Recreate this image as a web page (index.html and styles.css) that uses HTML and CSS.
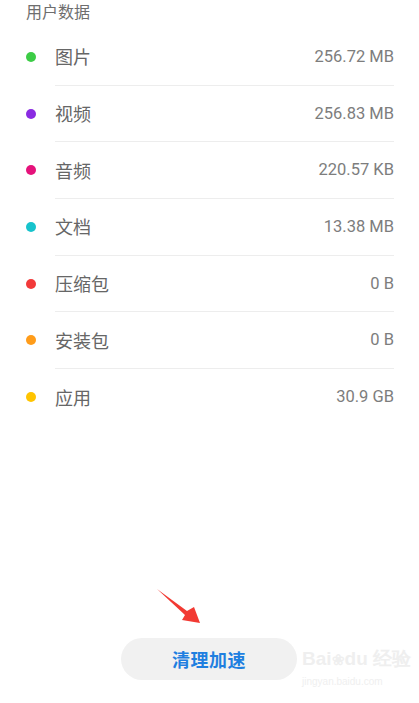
FILE: index.html
```html
<!DOCTYPE html>
<html lang="zh">
<head>
<meta charset="utf-8">
<link rel="stylesheet" href="styles.css">
</head>
<body>
<div class="page">
  <div class="header">用户数据</div>
  <ul class="list">
    <li class="row"><span class="dot green"></span><div class="cell"><span class="label">图片</span><span class="value">256.72 MB</span></div></li>
    <li class="row"><span class="dot purple"></span><div class="cell"><span class="label">视频</span><span class="value">256.83 MB</span></div></li>
    <li class="row"><span class="dot magenta"></span><div class="cell"><span class="label">音频</span><span class="value">220.57 KB</span></div></li>
    <li class="row"><span class="dot cyan"></span><div class="cell"><span class="label">文档</span><span class="value">13.38 MB</span></div></li>
    <li class="row"><span class="dot red"></span><div class="cell"><span class="label">压缩包</span><span class="value">0 B</span></div></li>
    <li class="row"><span class="dot orange"></span><div class="cell"><span class="label">安装包</span><span class="value">0 B</span></div></li>
    <li class="row last"><span class="dot yellow"></span><div class="cell"><span class="label">应用</span><span class="value">30.9 GB</span></div></li>
  </ul>
  <div class="footer">
    <button class="clean">清理加速</button>
  </div>
  <svg class="arrow" width="55" height="45" viewBox="0 0 55 45">
    <path d="M7 4 L37 26 L44 22 L50 38 L32 35 L35 30 Z" fill="#f23a33"/>
  </svg>
  <div class="watermark"><span class="wm-big">Bai<span class="wm-paw">❀</span>du 经验</span><span class="wm-small">jingyan.baidu.com</span></div>
</div>
</body>
</html>
```
FILE: styles.css
```css
* { box-sizing: border-box; }
html, body { margin: 0; padding: 0; background: #fff; }
body {
  font-family: "Noto Sans CJK SC", "Noto Sans", sans-serif;
  color: #666;
}
.page {
  position: relative;
  width: 419px;
  height: 703px;
  display: flex;
  flex-direction: column;
  overflow: hidden;
}
.header {
  height: 29px;
  padding-left: 26px;
  font-size: 16px;
  line-height: 22px;
  color: #6e6e6e;
}
.list {
  list-style: none;
  margin: 0;
  padding: 0;
}
.row {
  display: flex;
  align-items: stretch;
  height: 56.7px;
}
.dot {
  width: 10px;
  height: 10px;
  border-radius: 50%;
  margin: 23px 19px 0 26px;
  flex: none;
}
.green { background: #3ccc46; }
.purple { background: #8a2be2; }
.magenta { background: #e5127b; }
.cyan { background: #17c3cc; }
.red { background: #f23a3a; }
.orange { background: #ff9c1a; }
.yellow { background: #ffc400; }
.cell {
  flex: 1;
  display: flex;
  align-items: center;
  justify-content: space-between;
  margin-right: 25px;
  border-bottom: 1px solid #ededed;
  padding-bottom: 1px;
}
.row.last .cell { border-bottom: none; }
.label {
  font-size: 18px;
  color: #666;
}
.value {
  font-family: Roboto, "Liberation Sans", sans-serif;
  font-size: 16.5px;
  color: #7d7d7d;
}
.footer {
  margin-top: auto;
  display: flex;
  justify-content: center;
  padding-bottom: 23px;
  padding-right: 1px;
}
.clean {
  width: 176px;
  height: 42px;
  border: none;
  border-radius: 21px;
  background: #f1f1f1;
  color: #1f7fe0;
  font-family: "Noto Sans CJK SC", sans-serif;
  font-size: 18px;
  font-weight: 700;
  letter-spacing: 0.5px;
  padding: 0;
}
.arrow {
  position: absolute;
  left: 150px;
  top: 585px;
}
.watermark {
  position: absolute;
  left: 302px;
  top: 648px;
  display: flex;
  flex-direction: column;
  color: #efefef;
  font-family: "Liberation Sans", sans-serif;
}
.wm-big { font-size: 19px; font-weight: 700; line-height: 22px; }
.wm-paw { font-size: 15px; }
.wm-small { font-size: 10px; line-height: 14px; margin-top: 4px; }
```
